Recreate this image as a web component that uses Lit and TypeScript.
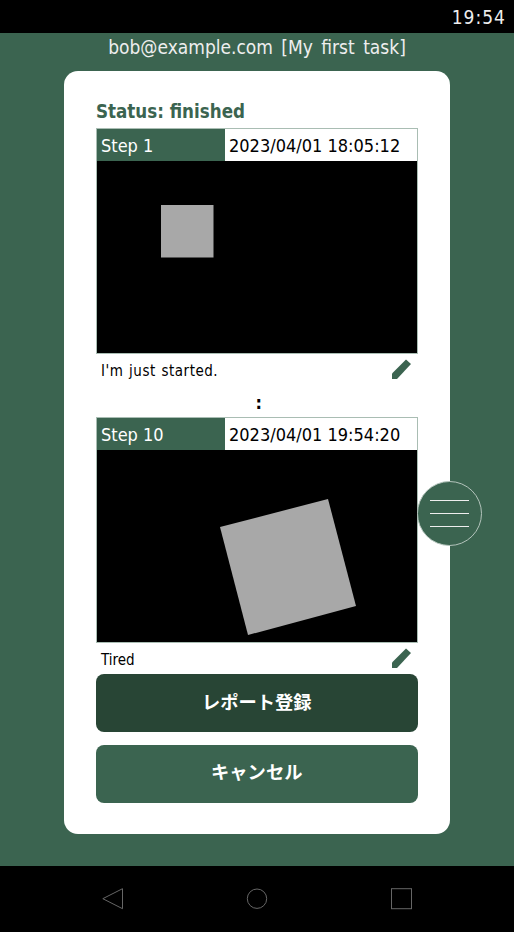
import { LitElement, html, css, svg } from "lit";
import { customElement } from "lit/decorators.js";

const pencil = html`<svg class="pencil" viewBox="0 0 21 21" width="21" height="21"><path d="M1 20 V14.5 L15 .5 L20 5 L6 20 Z" fill="#3b6450"/></svg>`;

@customElement("app-root")
export class AppRoot extends LitElement {
  static styles = css`
    :host { display: block; width: 514px; height: 932px; font-family: "DejaVu Sans", "Noto Sans CJK JP", sans-serif; font-stretch: condensed; }
    .page { position: relative; width: 514px; height: 932px; display: flex; flex-direction: column; background: #3b6450; box-sizing: border-box; overflow: hidden; }
    .status { height: 33px; flex: none; background: #000; color: #eee; display: flex; justify-content: flex-end; align-items: center; padding-right: 8px; font-size: 19px; letter-spacing: 1px; box-sizing: border-box; padding-top: 1px; }
    .title { height: 38px; flex: none; color: #eee; display: flex; justify-content: center; align-items: center; font-size: 19px; padding-bottom: 11px; box-sizing: border-box; word-spacing: 3px; }
    .card { margin: 0 64.5px 0 64px; height: 763px; flex: none; background: #fff; border-radius: 14px; box-sizing: border-box; padding: 27px 32px 0; display: flex; flex-direction: column; }
    .heading { color: #3b6450; font-weight: 700; font-size: 18.6px; line-height: 28px; height: 30px; }
    .step { border: 1px solid #a9bdb3; display: flex; flex-direction: column; }
    .step-head { display: flex; height: 32px; }
    .step-name { width: 128px; background: #3b6450; color: #fff; font-size: 18px; line-height: 33px; padding-left: 4px; box-sizing: border-box; }
    .step-time { flex: 1; color: #000; font-size: 18px; line-height: 34px; padding-left: 4px; }
    .canvas { display: block; width: 320px; height: 192px; background: #000; }
    .note { display: flex; justify-content: space-between; align-items: center; height: 31px; padding: 0 5px; font-size: 15px; color: #000; }
    .note span { padding-top: 2px; }
    .note span.wide { letter-spacing: 0.5px; word-spacing: 1px; }
    .pencil { display: block; margin-right: 1px; }
    .colon { text-align: center; font-weight: 700; font-size: 18px; line-height: 36px; height: 32px; padding-left: 4px; box-sizing: border-box; color: #000; }
    .btn { height: 58px; flex: none; border-radius: 8px; color: #fff; display: flex; align-items: center; justify-content: center; font-size: 18.3px; font-weight: 700; box-sizing: border-box; padding-bottom: 4px; }
    .btn.dark { background: #284535; }
    .btn.light { background: #3b6450; margin-top: 13px; padding-bottom: 6px; }
    .fab { position: absolute; left: 417px; top: 481px; width: 65px; height: 65px; box-sizing: border-box; border-radius: 50%; background: #3b6450; border: 1px solid #b4c4bc; display: flex; flex-direction: column; align-items: center; justify-content: center; gap: 12px; }
    .fab span { display: block; width: 39px; height: 1px; background: #eee; }
    .nav { height: 66px; flex: none; background: #000; margin-top: 32px; }
    .nav svg { display: block; }
  `;

  private step(name: string, time: string, note: string, shape: unknown, wide = false) {
    return html`
      <div class="step">
        <div class="step-head">
          <div class="step-name">${name}</div>
          <div class="step-time">${time}</div>
        </div>
        <svg class="canvas" viewBox="0 0 320 192">${shape}</svg>
      </div>
      <div class="note"><span class=${wide ? "wide" : ""}>${note}</span>${pencil}</div>
    `;
  }

  render() {
    return html`
      <div class="page">
        <div class="status">19:54</div>
        <div class="title">bob@example.com [My first task]</div>
        <div class="card">
          <div class="heading">Status: finished</div>
          ${this.step("Step 1", "2023/04/01 18:05:12", "I'm just started.", svg`<rect x="64" y="44" width="52.5" height="52.5" fill="#a8a8a8"/>`, true)}
          <div class="colon">:</div>
          ${this.step("Step 10", "2023/04/01 19:54:20", "Tired", svg`<polygon points="123,77 231,49 259,156 151,185" fill="#a8a8a8"/>`)}
          <div class="btn dark">レポート登録</div>
          <div class="btn light">キャンセル</div>
        </div>
        <div class="nav">
          <svg width="514" height="66" viewBox="0 0 514 66" fill="none" stroke="#666" stroke-width="1">
            <path d="M122.5 22.7 V42.7 L102.8 32.7 Z"/>
            <circle cx="257" cy="32.7" r="9.7"/>
            <rect x="391.5" y="22.7" width="20" height="20"/>
          </svg>
        </div>
        <div class="fab"><span></span><span></span><span></span></div>
      </div>
    `;
  }
}
